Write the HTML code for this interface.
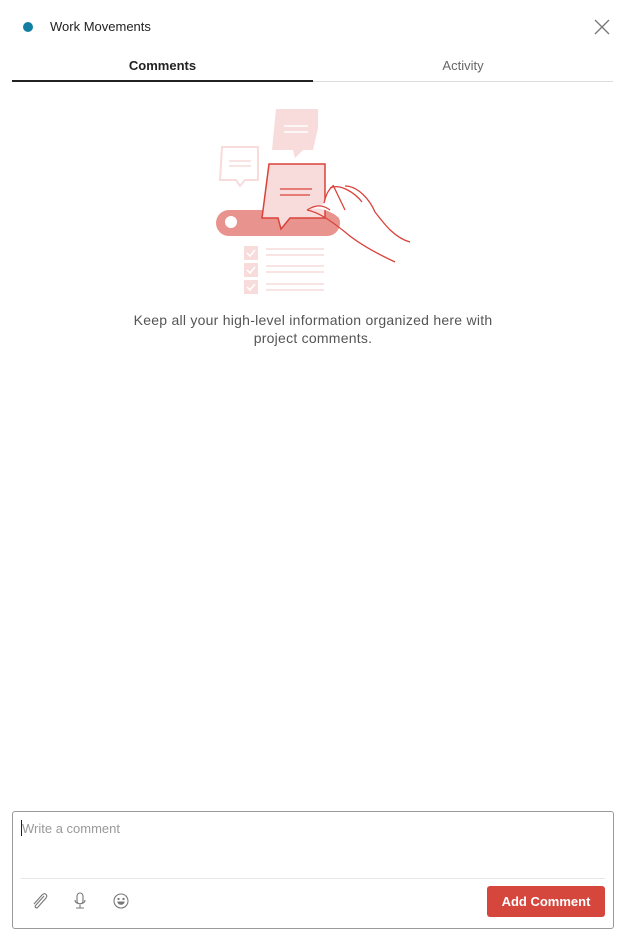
<!DOCTYPE html>
<html><head><style>
body{margin:0;width:633px;height:943px;background:#fff;font-family:"Liberation Sans",sans-serif;position:relative;overflow:hidden}
.a{position:absolute}
</style></head><body>
<div class="a" style="left:23px;top:22px;width:10px;height:10px;border-radius:50%;background:#127fa0"></div>
<div class="a" style="left:50px;top:19px;font-size:13px;color:#222">Work Movements</div>
<svg class="a" style="left:594px;top:19px" width="16" height="16"><path d="M1 1L15 15M15 1L1 15" stroke="#777" stroke-width="1.3"/></svg>
<div class="a" style="left:12px;top:58px;width:301px;text-align:center;font-size:13px;font-weight:bold;color:#222">Comments</div>
<div class="a" style="left:313px;top:58px;width:300px;text-align:center;font-size:13px;color:#666">Activity</div>
<div class="a" style="left:12px;top:81px;width:601px;height:1px;background:#ddd"></div>
<div class="a" style="left:12px;top:80px;width:301px;height:2px;background:#222"></div>
<svg class="a" style="left:0;top:0" width="633" height="320">
<path d="M276 109H318V128L313 150H303L295 158L293 150H272Z" fill="#f7dcdb"/>
<path d="M284 126H308M284 132H308" stroke="#fff" stroke-width="1.5"/>
<path d="M222 147H258V180H245L240 186L236 180H220Z" fill="none" stroke="#f7dcdb" stroke-width="2"/>
<path d="M229 161H251M229 166H251" stroke="#f7dcdb" stroke-width="1.5"/>
<rect x="216" y="210" width="124" height="26" rx="13" fill="#e8938d"/>
<circle cx="231" cy="222" r="6" fill="#fff"/>
<path d="M269 164H325V218H290L281 229L278 218H262Z" fill="#f8dcdb" stroke="#d9433b" stroke-width="1.5"/>
<path d="M280 189H312M280 195H310" stroke="#d9433b" stroke-width="1.3"/>
<path d="M307 210C318 206 326 210 334 214C345 222 360 240 395 262L420 262L420 230C405 238 395 232 385 222C375 210 368 197 356 190C348 186 340 186 332 188C328 192 326 198 324 204Z" fill="#fff"/>
<path d="M307 210C318 212 330 220 345 232C360 245 380 255 395 262M324 203C326 195 328 190 333 186M330 188C340 183 355 193 362 202M345 186C358 186 370 200 375 212C385 225 395 238 410 242M333 185L345 210M307 210C315 205 322 204 330 210" fill="none" stroke="#d9433b" stroke-width="1.3"/>
<g fill="#f7dcdb"><rect x="244" y="246" width="14" height="14"/><rect x="244" y="263" width="14" height="14"/><rect x="244" y="280" width="14" height="14"/></g>
<g stroke="#fff" stroke-width="1.5" fill="none"><path d="M247 253L250 256L255 250M247 270L250 273L255 267M247 287L250 290L255 284"/></g>
<g stroke="#f7dcdb" stroke-width="1.5"><path d="M266 249H324M266 255H324M266 266H324M266 272H324M266 284H324M266 290H324"/></g>
</svg>
<div class="a" style="left:0;top:311px;width:626px;text-align:center;font-size:14px;line-height:18px;color:#555;letter-spacing:0.25px">Keep all your high-level information organized here with<br>project comments.</div>
<div class="a" style="left:12px;top:811px;width:600px;height:116px;border:1px solid #999;border-radius:3px"></div>
<div class="a" style="left:21px;top:820px;width:1px;height:16px;background:#222"></div>
<div class="a" style="left:22px;top:821px;font-size:13px;color:#999">Write a comment</div>
<div class="a" style="left:21px;top:878px;width:584px;height:1px;background:#e6e6e6"></div>
<svg class="a" style="left:30px;top:890px" width="110" height="22" fill="none" stroke="#777" stroke-width="1.1">
<path d="M14 6L6 15C4 17 6 19 8 17L16 8C18 5 15 2 12 5L4 14"/>
<rect x="47" y="3" width="6" height="11" rx="3"/><path d="M45 10C45 15 55 15 55 10M50 15V18M46 18H54"/>
<circle cx="91" cy="11" r="7"/><circle cx="88.5" cy="9" r=".6" fill="#777"/><circle cx="93.5" cy="9" r=".6" fill="#777"/><path d="M88 12H94C94 15 88 15 88 12Z" fill="#777"/>
</svg>
<div class="a" style="left:487px;top:886px;width:118px;height:31px;border-radius:3px;background:#d5463c;color:#fff;font-size:13px;font-weight:bold;text-align:center;line-height:31px">Add Comment</div>
</body></html>
